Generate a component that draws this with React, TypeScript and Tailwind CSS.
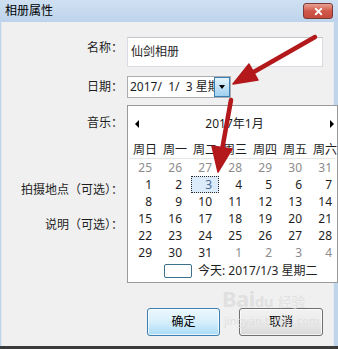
import type { ReactNode } from "react";
import { X } from "lucide-react";

const weekDays = ["周日", "周一", "周二", "周三", "周四", "周五", "周六"];

// [day, muted]
const weeks: [string, boolean][][] = [
  [["25", true], ["26", true], ["27", true], ["28", true], ["29", true], ["30", true], ["31", true]],
  [["1", false], ["2", false], ["3", false], ["4", false], ["5", false], ["6", false], ["7", false]],
  [["8", false], ["9", false], ["10", false], ["11", false], ["12", false], ["13", false], ["14", false]],
  [["15", false], ["16", false], ["17", false], ["18", false], ["19", false], ["20", false], ["21", false]],
  [["22", false], ["23", false], ["24", false], ["25", false], ["26", false], ["27", false], ["28", false]],
  [["29", false], ["30", false], ["31", false], ["1", true], ["2", true], ["3", true], ["4", true]],
];

function Field({ label, children, className = "" }: { label: string; children?: ReactNode; className?: string }) {
  return (
    <div className={`flex ${className}`}>
      <div className="w-[121px] shrink-0 h-[22px] leading-[22px] text-right text-[12px] text-[#1e1e1e]">{label}</div>
      <div className="ml-[4px] flex-1">{children}</div>
    </div>
  );
}

function Calendar() {
  return (
    <div className="absolute left-[127px] top-[105px] w-[211px] h-[178px] bg-white border border-[#9a9a9a] pt-[8px] text-[12px] text-[#1e1e1e]">
      {/* month header */}
      <div className="flex items-center justify-between h-[20px] pl-[7px] pr-[3px]">
        <span className="w-0 h-0 border-y-[4px] border-y-transparent border-r-[4px] border-r-black"></span>
        <span className="leading-none">2017年1月</span>
        <span className="w-0 h-0 border-y-[4px] border-y-transparent border-l-[4px] border-l-black"></span>
      </div>

      {/* week day names */}
      <div className="mt-[7px] mx-[2px] grid grid-cols-[repeat(7,30px)] h-[18px] border-b border-[#e6e6e6]">
        {weekDays.map((d) => (
          <div key={d} className="text-center leading-[17px]">{d}</div>
        ))}
      </div>

      {/* days */}
      <div className="mx-[2px]">
        {weeks.map((week, i) => (
          <div key={i} className="grid grid-cols-[repeat(7,30px)] h-[17px]">
            {week.map(([day, muted], j) => {
              const selected = i === 1 && j === 2;
              return (
                <div key={j} className="px-[1px]">
                  <div
                    className={`h-[17px] text-right ${
                      muted ? "text-[#8c8c8c]" : selected ? "text-[#4b6d96]" : "text-[#1e1e1e]"
                    } ${selected ? "bg-[#dcebfa] border border-dotted border-[#2a2a2a] pr-[6px] leading-[15px]" : "pr-[7px] leading-[17px]"}`}
                  >
                    {day}
                  </div>
                </div>
              );
            })}
          </div>
        ))}
      </div>

      {/* today */}
      <div className="flex items-center h-[17px] pl-[36px] mt-[1px]">
        <span className="w-[28px] h-[14px] border border-[#3d6f8e] rounded-[2px] bg-white"></span>
        <span className="ml-[6px] leading-none">今天: 2017/1/3 星期二</span>
      </div>
    </div>
  );
}

function Arrows() {
  return (
    <svg className="absolute inset-0 pointer-events-none" width="338" height="349" viewBox="0 0 338 349">
      <g fill="#b3181b" stroke="#b3181b" strokeLinecap="round" strokeLinejoin="round">
        <line x1="315" y1="37" x2="252" y2="73" strokeWidth="4.5" />
        <polygon points="233,84 258,80 249,64" strokeWidth="1.5" />
        <line x1="231" y1="100" x2="222" y2="150" strokeWidth="4.5" />
        <polygon points="218,172 232,149 212,146" strokeWidth="1.5" />
      </g>
    </svg>
  );
}

export default function App() {
  return (
    <div className="relative w-[338px] h-[349px] overflow-hidden bg-[#f0f0f0] font-['Noto_Sans','Noto_Sans_CJK_SC',sans-serif]">
      <div className="flex flex-col h-[346px]">
        {/* Title bar */}
        <div className="relative h-[22px] shrink-0 bg-gradient-to-b from-[#cfe0f2] to-[#bed4ec] flex items-center pl-[5px]">
          <span className="text-[12px] text-black leading-none">相册属性</span>
          <div className="absolute right-[5px] top-[3px] w-[30px] h-[16px] rounded-[3px] border border-[#7a3a3a] bg-gradient-to-b from-[#e8a193] via-[#d0584a] to-[#c44a3c] flex items-center justify-center">
            <X className="w-[11px] h-[11px] text-white" strokeWidth={4} />
          </div>
        </div>

        <div className="flex flex-1">
          <div className="w-[2px] bg-[#c0d4ea] border-r border-[#dfe8f2]"></div>

          {/* Client area */}
          <div className="flex-1 flex flex-col pt-[15px] pr-[10px] bg-[#f0f0f0]">
            <Field label="名称：">
              <div className="h-[30px] bg-white border border-[#d9dde3] border-t-[#c2c6cc] pl-[3px] text-[12px] leading-[28px] text-[#1e1e1e]">
                仙剑相册
              </div>
            </Field>

            <Field label="日期：" className="mt-[9px]">
              <div className="w-[104px] h-[22px] bg-white border border-[#abadb3] flex overflow-hidden">
                <div className="flex-1 overflow-hidden whitespace-nowrap pl-[2px] text-[12px] leading-[20px] text-[#1e1e1e]">
                  2017/&nbsp; 1/&nbsp; 3 星期二
                </div>
                <div className="w-[16px] h-full border border-[#3c7fb1] bg-gradient-to-b from-[#e5f4fc] to-[#9fd0ef] flex items-center justify-center">
                  <span className="w-0 h-0 border-x-[3px] border-x-transparent border-t-[4px] border-t-black"></span>
                </div>
              </div>
            </Field>

            <Field label="音乐：" className="mt-[14px]">
              <div className="h-[22px] bg-white border border-[#d9dde3]"></div>
            </Field>

            <Field label="拍摄地点（可选）：" className="mt-[45px]">
              <div className="h-[22px] bg-white border border-[#d9dde3]"></div>
            </Field>

            <Field label="说明（可选）：" className="mt-[13px]">
              <div className="h-[69px] bg-white border border-[#d9dde3] border-b-[#b5b8bd]"></div>
            </Field>

            <div className="mt-[25px] flex justify-end gap-[19px]">
              <button className="w-[73px] h-[28px] rounded-[3px] border border-[#3c7fb1] bg-gradient-to-b from-[#ecf7fd] via-[#d6effc] to-[#a9dbf6] text-[12px] text-black shadow-[inset_0_0_0_1px_rgba(255,255,255,0.7)]">
                确定
              </button>
              <button className="w-[84px] h-[28px] rounded-[3px] border border-[#707070] bg-gradient-to-b from-[#f2f2f2] via-[#ebebeb] to-[#d8d8d8] text-[12px] text-black shadow-[inset_0_0_0_1px_rgba(255,255,255,0.7)]">
                取消
              </button>
            </div>
          </div>

          <div className="w-[5px] bg-[#c0d4ea] border-l border-[#e3ebf4]"></div>
        </div>
      </div>
      <div className="h-[3px] bg-[#3a3a3a]"></div>

      <Calendar />

      {/* watermark */}
      <div className="absolute left-[222px] top-[287px] pointer-events-none text-[#dcdcdc]/80 leading-none">
        <div className="text-[22px] font-bold tracking-tight">Bai<span className="text-[15px]">du</span> <span className="text-[14px] font-normal">经验</span></div>
        <div className="mt-[6px] ml-[2px] text-[11px]">jingyan.baidu.com</div>
      </div>

      <Arrows />
    </div>
  );
}
